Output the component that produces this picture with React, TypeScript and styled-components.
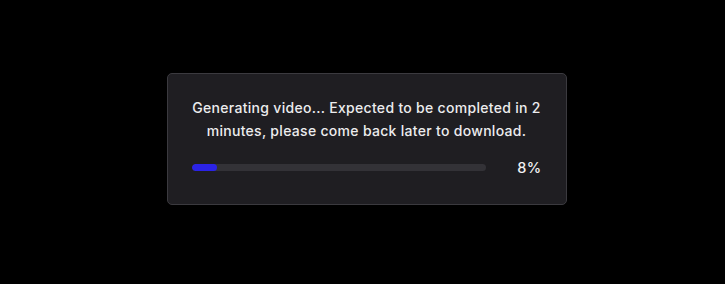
import styled, { createGlobalStyle } from 'styled-components';

const GlobalStyle = createGlobalStyle`
    html, body {
        margin: 0;
        padding: 0;
        background: #000;
    }
    body {
        font-family: 'Inter', 'Open Sans', sans-serif;
    }
`;

const Page = styled.div`
    box-sizing: border-box;
    width: 725px;
    height: 284px;
    padding: 0 0 6px 8px;
    display: flex;
    align-items: center;
    justify-content: center;
    background: #000;
`;

const Card = styled.div`
    box-sizing: border-box;
    width: 400px;
    height: 132px;
    padding: 22px 24px 0;
    background: #1f1e22;
    border: 1px solid #3b3a3f;
    border-radius: 5px;
    display: flex;
    flex-direction: column;
    align-items: center;
`;

const Message = styled.p`
    margin: 0;
    text-align: center;
    color: #ececee;
    font-size: 14px;
    line-height: 23px;
    font-weight: 500;
    letter-spacing: 0.3px;
    white-space: nowrap;
`;

const ProgressRow = styled.div`
    width: 100%;
    display: flex;
    align-items: center;
    margin-top: 17px;
`;

const Track = styled.div`
    flex: 0 0 294px;
    height: 7px;
    border-radius: 4px;
    background: #333237;
    overflow: hidden;
`;

const Fill = styled.div`
    height: 100%;
    min-width: 25px;
    border-radius: 4px;
    background: #2b23e6;
`;

const Percent = styled.span`
    flex: 1;
    text-align: right;
    color: #f2f2f4;
    font-size: 14.5px;
    font-weight: 500;
    letter-spacing: 0.3px;
`;

const progress = 8;

export default function App() {
    return (
        <>
            <GlobalStyle />
            <Page>
                <Card>
                    <Message>
                        Generating video... Expected to be completed in 2
                        <br />
                        minutes, please come back later to download.
                    </Message>
                    <ProgressRow>
                        <Track>
                            <Fill style={{ width: `${progress}%` }} />
                        </Track>
                        <Percent>{progress}%</Percent>
                    </ProgressRow>
                </Card>
            </Page>
        </>
    );
}
